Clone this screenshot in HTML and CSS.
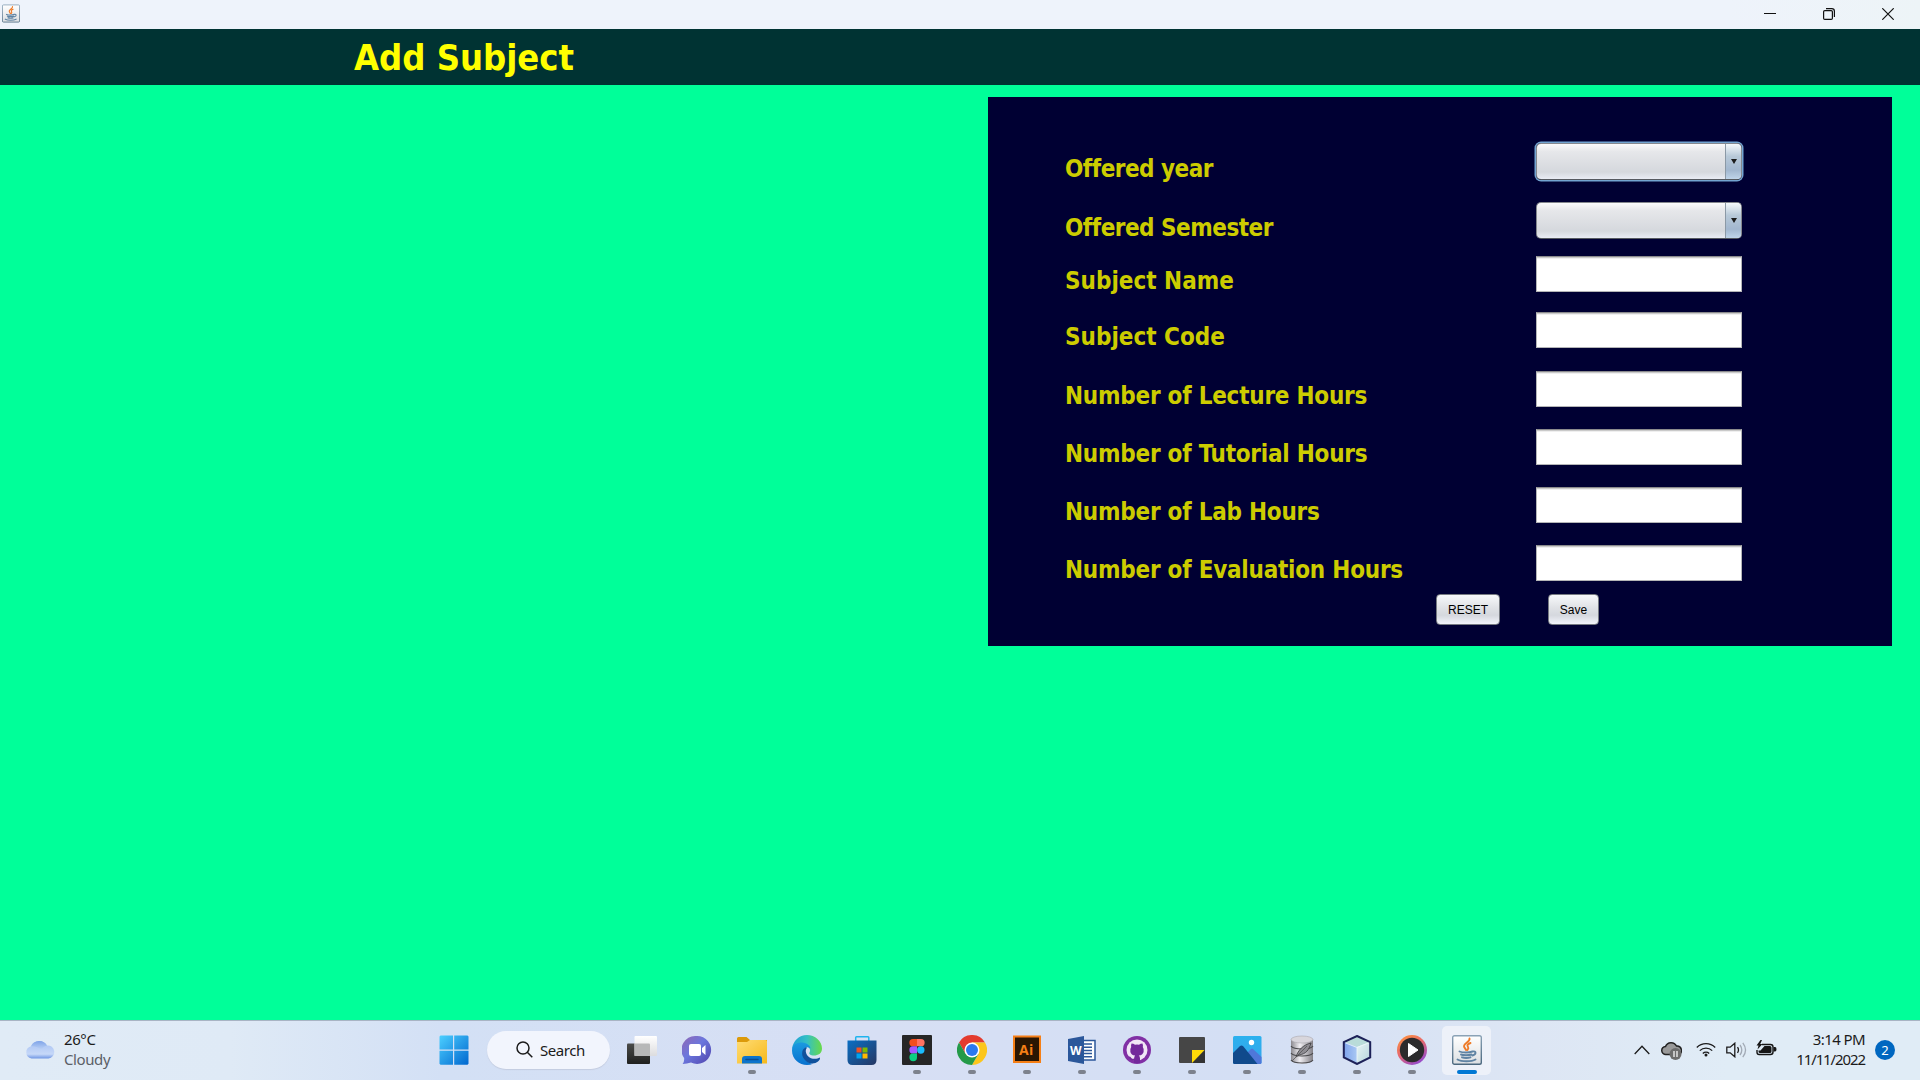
FILE: index.html
```html
<!DOCTYPE html>
<html lang="en">
<head>
<meta charset="utf-8">
<title>Add Subject</title>
<link rel="stylesheet" href="styles.css">
</head>
<body>
<div class="screen">
  <div class="titlebar">
    <svg class="app-icon" viewBox="0 0 30 30"><use href="#java"/></svg>
    <div class="window-buttons">
      <svg viewBox="0 0 12 12"><path d="M0 5.5h12"/></svg>
      <svg viewBox="0 0 12 12"><rect x=".6" y="2.6" width="8.8" height="8.8" rx="1.2"/><path d="M3 .6h5.8a2.6 2.6 0 0 1 2.6 2.6V9"/></svg>
      <svg viewBox="0 0 12 12"><path d="M.3.3l11.4 11.4M11.7.3L.3 11.7"/></svg>
    </div>
  </div>
  <header class="header"><h1 class="heading">Add Subject</h1></header>
  <main class="content">
    <form class="panel">
      <div class="fields">
        <label class="label tight">Offered year</label>
        <div class="combo focused"><span class="combo-arrow"></span></div>
        <label class="label tight">Offered Semester</label>
        <div class="combo"><span class="combo-arrow"></span></div>
        <label class="label">Subject Name</label>
        <div class="field"></div>
        <label class="label">Subject Code</label>
        <div class="field"></div>
        <label class="label snug">Number of Lecture Hours</label>
        <div class="field"></div>
        <label class="label snug">Number of Tutorial Hours</label>
        <div class="field"></div>
        <label class="label snug">Number of Lab Hours</label>
        <div class="field"></div>
        <label class="label snug">Number of Evaluation Hours</label>
        <div class="field"></div>
      </div>
      <div class="actions">
        <button class="button reset" type="button">RESET</button>
        <button class="button save" type="button">Save</button>
      </div>
    </form>
  </main>
  <footer class="taskbar">
    <div class="weather">
      <svg class="cloud" viewBox="0 0 30 20">
        <defs>
          <linearGradient id="cl" x2="0" y2="1"><stop stop-color="#7ea3e8"/><stop offset="1" stop-color="#c3d7f7"/></linearGradient>
          <linearGradient id="cl2" x2="0" y2="1"><stop stop-color="#a5c0f2"/><stop offset=".75" stop-color="#c6d8f8"/><stop offset="1" stop-color="#6f96e4"/></linearGradient>
        </defs>
        <path fill="url(#cl2)" d="M6.5 19.5A6.3 6.3 0 0 1 6 7.2 9 9 0 0 1 22 6.5a6.5 6.5 0 0 1 1.5 13z"/>
        <path fill="url(#cl)" d="M6 7.2A9 9 0 0 1 22 6.5q-4.5 1-5.5 5Q12.5 7 6 7.2z"/>
      </svg>
      <div class="weather-text"><span>26°C</span><span class="muted">Cloudy</span></div>
    </div>
    <div class="dock">
      <div class="start">
        <svg class="icon" viewBox="0 0 30 30">
          <linearGradient id="win" x2="1" y2="1"><stop stop-color="#4ccfff"/><stop offset="1" stop-color="#0067cf"/></linearGradient>
          <path fill="url(#win)" d="M1.5.5H14v14H.5v-13zM15.2.5h13.300l1 1v13H15.200zM.5 15.700H14v14H1.500l-1-1zM15.200 15.700h14.300v13l-1 1H15.200z"/>
        </svg>
      </div>
      <div class="search">
        <svg class="search-icon" viewBox="0 0 17 17"><circle cx="7" cy="7" r="6"/><path d="M11.3 11.3L16.3 16.3"/></svg>
        <span>Search</span>
      </div>
      <div class="task">
        <svg class="icon" viewBox="0 0 30 30">
          <linearGradient id="tv" x2="0" y2="1"><stop stop-color="#4a4b49"/><stop offset="1" stop-color="#20211f"/></linearGradient>
          <linearGradient id="tv2" x2="0" y2="1"><stop stop-color="#fff"/><stop offset="1" stop-color="#dcdcde"/></linearGradient>
          <rect y="8.5" width="23" height="20.5" rx="1" fill="url(#tv)"/><rect x="7.5" y="1" width="22.5" height="20" rx="1" fill="url(#tv2)"/><path d="M7.5 8.5H22q1 0 1 1V21H7.500z" fill="#b7b8b8"/>
        </svg>
      </div>
      <div class="task">
        <svg class="icon" viewBox="0 0 30 30">
          <linearGradient id="chat" x2="1" y2="1"><stop stop-color="#9267b4"/><stop offset=".45" stop-color="#6b77dd"/><stop offset="1" stop-color="#5144ad"/></linearGradient>
          <path fill="url(#chat)" d="M15 1a14 14 0 1 1-6 26.600Q5 29 .6 29q1.900-2.500 1.500-6A14 14 0 0 1 15 1z"/>
          <rect x="7" y="9" width="12" height="12" rx="2" fill="#fff"/><path fill="#fff" d="M20 13l3.500-3v10L20 17z"/>
        </svg>
      </div>
      <div class="task">
        <svg class="icon" viewBox="0 0 30 30">
          <linearGradient id="fo" x2="1" y2="1"><stop stop-color="#ffdc75"/><stop offset="1" stop-color="#f6b91b"/></linearGradient>
          <path fill="#dc9a0a" d="M0 9V3.500Q0 2 1.500 2h8L13 5h17v4z"/><path fill="url(#fo)" d="M0 7h10l3-2h15.500Q30 5 30 6.500V28.500H0z"/>
          <path fill="#0d74cc" d="M5 28.500V24q0-3 3-3h14q3 0 3 3v4.500z"/><path d="M9 24.500h12" stroke="#0b4d92" stroke-width="1.5" stroke-linecap="round"/>
        </svg><i class="dot"></i>
      </div>
      <div class="task">
        <svg class="icon" viewBox="0 0 30 30">
          <linearGradient id="e1" x2="1"><stop stop-color="#1c9ed8"/><stop offset=".5" stop-color="#35c0c4"/><stop offset="1" stop-color="#68da48"/></linearGradient>
          <linearGradient id="e2" x2="0" y2="1"><stop stop-color="#1b9ae0"/><stop offset="1" stop-color="#0871cf"/></linearGradient>
          <path fill="url(#e1)" d="M0 14C1 6 7 0 15 0s15 6 15 13.500c0 5-4 7-8 7-3.500 0-5.500-1.500-4.500-3 2-3-1-7-6-7-4 0-9 1-11.500 3.500z"/>
          <path fill="url(#e2)" d="M0 15.500C0 10 5 7 10 7.500c5 .3 8.500 3.500 8.500 6-4-3-7 0-7 4C11.500 24 17 29 21 28.700 12 32.500 0 27 0 15.500z"/>
          <path fill="#10519c" d="M13.200 12.500C9 15 9 22 14 26c4 3.500 9 3 12 .5 1.500-1.300 2.500-3 1.800-4-3 2-9 2-12-1.500-2-2.500-3-6-.6-8.500z"/>
        </svg>
      </div>
      <div class="task">
        <svg class="icon" viewBox="0 0 30 30">
          <linearGradient id="st" x2="1" y2="1"><stop stop-color="#0a6fc4"/><stop offset="1" stop-color="#263763"/></linearGradient>
          <path d="M8.700 6.500V2.500q0-.8.800-.8h11.500q.8 0 .8.800v4" fill="none" stroke="#20b4ee" stroke-width="1.5"/><path fill="url(#st)" d="M.5 5.500h29V25q0 5-5 5h-19q-5 0-5-5z"/>
          <path fill="#f25022" d="M9.500 12.500h5v5h-5z"/><path fill="#7fba00" d="M15.500 12.500h5v5h-5z"/><path fill="#00a4ef" d="M9.500 18.500h5v5h-5z"/><path fill="#ffb900" d="M15.500 18.500h5v5h-5z"/>
        </svg>
      </div>
      <div class="task">
        <svg class="icon" viewBox="0 0 30 30">
          <rect width="30" height="30" rx="1" fill="#262626"/><path fill="#f24e1e" d="M15 4h-4a3.500 3.500 0 0 0 0 7.300h4z"/><path fill="#ff7262" d="M15 4h4a3.500 3.500 0 0 1 0 7.300h-4z"/><path fill="#a259ff" d="M15 11.300h-4a3.500 3.500 0 0 0 0 7.300h4z"/><circle cx="18.800" cy="15" r="3.700" fill="#1abcfe"/><path fill="#0acf83" d="M15 18.600h-4a3.800 3.800 0 1 0 4 3.800z"/>
        </svg><i class="dot"></i>
      </div>
      <div class="task">
        <svg class="icon" viewBox="0 0 30 30">
          <path fill="#e33b2e" d="M2 7.500A15 15 0 0 1 28 7.500H15L8.500 19z"/><path fill="#fcc61c" d="M28 7.500A15 15 0 0 1 15 30l6.500-11.300L15 7.500z"/><path fill="#249a49" d="M15 30A15 15 0 0 1 2 7.500l6.500 11.300 13 0z"/><circle cx="15" cy="15" r="7.500" fill="#fff"/><circle cx="15" cy="15" r="6" fill="#2b79ef"/>
        </svg><i class="dot"></i>
      </div>
      <div class="task">
        <svg class="icon" viewBox="0 0 30 30">
          <rect x="2" y="1.5" width="26" height="25.5" fill="#2a1602" stroke="#f57f16" stroke-width="2"/><text class="ai" x="7" y="19.5">Ai</text>
        </svg><i class="dot"></i>
      </div>
      <div class="task">
        <svg class="icon" viewBox="0 0 30 30">
          <rect x="15" y="5.500" width="13" height="19.500" fill="#fff" stroke="#2b579a" stroke-width="1.5"/><path d="M16 9h9M16 12.200h9M16 15.400h9M16 18.600h9M16 21.800h9" stroke="#2b579a" stroke-width="1.5"/><path fill="#2b579a" d="M1 4l16-3v28L1 26z"/><text class="word" x="3" y="20">W</text>
        </svg><i class="dot"></i>
      </div>
      <div class="task">
        <svg class="icon" viewBox="0 0 30 30">
          <circle cx="15" cy="15" r="14" fill="#8130a5"/><circle cx="15" cy="15" r="10.500" fill="#f1e7f6"/><path fill="#73299b" d="M9.500 8.500q2 0 3.500 1.200 2-.4 4 0 1.500-1.200 3.500-1.200.8 2 .3 3.500 1.500 2 .8 5-.8 3-4.800 3.600 1.200 1 1.200 3V28h-6v-3q-3.500.7-4.500-1.800-.5-1-1.200-1.500 2-.4 3 1.200 1 1.300 2.800.6.100-2 1-2.900-4-.6-4.700-3.600-.7-3 .8-5-.5-1.500.3-3.500z"/>
        </svg><i class="dot"></i>
      </div>
      <div class="task">
        <svg class="icon" viewBox="0 0 30 30"><rect x="2" y="2" width="26" height="26" rx="1" fill="#464646"/><path fill="#333" d="M28 15v13H15z"/><path fill="#fedb08" d="M15 15h12.500L15 28z"/></svg><i class="dot"></i>
      </div>
      <div class="task">
        <svg class="icon" viewBox="0 0 30 30">
          <linearGradient id="ph" x2="0" y2="1"><stop stop-color="#2cb1ee"/><stop offset="1" stop-color="#35a4eb"/></linearGradient>
          <rect x="1" y="1" width="28.500" height="28" rx="1.500" fill="url(#ph)"/><path fill="#4f77d9" d="M13 20l6-6q1-.8 2 0l8.500 8v6l-1 1H13z"/><path fill="#104a8c" d="M1 18l7-7q1.500-1 3 0l14.500 18H2l-1-1z"/><circle cx="19.500" cy="7.500" r="2.700" fill="#fff"/>
        </svg><i class="dot"></i>
      </div>
      <div class="task">
        <svg class="icon" viewBox="0 0 30 30">
          <linearGradient id="db"><stop stop-color="#8b898f"/><stop offset=".4" stop-color="#f0eef2"/><stop offset="1" stop-color="#828086"/></linearGradient>
          <path fill="url(#db)" d="M4 4v21c2 5 20 5 22 0V4z"/><ellipse cx="15" cy="4.500" rx="11" ry="3.500" fill="#d8d6dc" stroke="#aaa8af" stroke-width=".6"/><path d="M4 11c3 4 19 4 22 0M4 18c3 4 19 4 22 0M4 25c3 4 19 4 22 0" fill="none" stroke="#4a4a4d" stroke-width="1.2"/><path fill="#8f8d93" stroke="#37373a" stroke-width=".8" d="M9 22c2-7 7-12 15-14-2 7-5 11-12 12z"/><path d="M5 26L20 11" stroke="#555" stroke-width=".8"/>
        </svg><i class="dot"></i>
      </div>
      <div class="task">
        <svg class="icon" viewBox="0 0 30 30">
          <linearGradient id="nb"><stop stop-color="#7fa3ec"/><stop offset="1" stop-color="#a9c8f3"/></linearGradient>
          <linearGradient id="nb2" x2="1" y2="1"><stop stop-color="#e8f5f5"/><stop offset="1" stop-color="#b5d4dc"/></linearGradient>
          <path fill="#b9dcd9" d="M15 1l13 6-13 5L2 7z"/><path fill="url(#nb)" d="M2 7l13 5v17L2 22z"/><path fill="url(#nb2)" d="M28 7l-13 5v17l13-7z"/><path d="M15 1l13.200 6.200v15.300L15 29 1.800 22.500V7.200z" fill="none" stroke="#1d2158" stroke-width="2"/><path d="M3.500 8L15 12.500 26.500 8M15 12.500v14" fill="none" stroke="#eff8fa" stroke-width=".8"/>
        </svg><i class="dot"></i>
      </div>
      <div class="task">
        <svg class="icon" viewBox="0 0 30 30">
          <linearGradient id="mp" x2=".6" y2="1"><stop stop-color="#ff9a36"/><stop offset=".5" stop-color="#e96a69"/><stop offset="1" stop-color="#994cc8"/></linearGradient>
          <circle cx="15" cy="15" r="15" fill="url(#mp)"/><circle cx="15" cy="15" r="12.200" fill="#2c2b2c"/><path fill="#fff" stroke="#fff" stroke-linejoin="round" d="M11.500 8.500v13L21 15z"/>
        </svg><i class="dot"></i>
      </div>
      <div class="task active">
        <svg class="icon" viewBox="0 0 30 30">
          <defs><linearGradient id="jb" x2="0" y2="1"><stop stop-color="#fff"/><stop offset="1" stop-color="#dcdfe2"/></linearGradient><linearGradient id="je" x2="0" y2="1"><stop stop-color="#8aa2b6"/><stop offset="1" stop-color="#4b687f"/></linearGradient></defs>
          <g id="java"><rect x=".7" y=".7" width="28.600" height="28.600" rx="1.800" fill="url(#jb)" stroke="url(#je)" stroke-width="1.400"/>
          <g fill="none" stroke-linecap="round"><path d="M17.500 3.500c1 3-5.500 4.500-5.500 7.500 0 1.700 1.500 2.500 2 4M18.500 8c-3 1-3.700 2.500-2.500 4 .8 1.200.3 2-.5 3" stroke="#ee7b28" stroke-width="1.900"/><path d="M7.500 16.500c3 1.300 9.500 1.300 13 0M9 19.500c3 1 7 1 10.500 0M10 22.300c3 .9 5.500.9 8.500 0M20.500 16.500c4-1 4 3 0 4M5.500 24.500c4 2.300 14 2.300 18 0" stroke="#5f83a3" stroke-width="1.900"/></g></g>
        </svg><i class="dot"></i>
      </div>
    </div>
    <div class="tray">
      <svg class="chevron" viewBox="0 0 16 10"><path d="M.7 9L8 1.300 15.300 9"/></svg>
      <svg class="onedrive" viewBox="0 0 21 20"><path d="M5 13.500a4 4 0 0 1-.5-8A6 6 0 0 1 15.500 5a4.500 4.500 0 0 1 2.500 8.500z" fill="#999" stroke="#222" stroke-width="1.500"/><circle cx="14.500" cy="13" r="6" fill="#6c6c6c"/><path d="M13 10v6M16 10v6" stroke="#fff" stroke-width="1.200"/></svg>
      <svg class="wifi" viewBox="0 0 20 15"><path d="M.8 5.500a13 13 0 0 1 18.400 0M3.800 8.600a8.800 8.800 0 0 1 12.400 0M6.800 11.500a4.600 4.600 0 0 1 6.400 0"/><circle cx="10" cy="13" r="1.500"/></svg>
      <svg class="volume" viewBox="0 0 21 16"><path d="M.8 5.200h3.400L8.800 1.200v13.600L4.200 10.800H.8zM11.500 5.200q2 2.800 0 5.600"/><path class="faint" d="M14 3q3.600 5 0 10M16.800.8q5.500 7.200 0 14.400"/></svg>
      <svg class="battery" viewBox="0 0 21 16"><path d="M6 4.500h8.500a2.500 2.500 0 0 1 2.500 2.500v5a2.500 2.500 0 0 1-2.500 2.500H3.200a2.200 2.200 0 0 1-2.200-2.200V10" fill="none" stroke="#161616" stroke-width="1.400"/><path d="M8.500 6h5.500q1.500 0 1.500 1.500v4q0 1.500-1.500 1.500H4q-1.500 0-1.500-1.500V10.500h2zM17.500 7h1.500q1.500 0 1.500 2.300t-1.500 2.300h-1.500zM4.500 0L.5 5.500h2L1.500 9.500 6.500 4H4.200L6 0z" fill="#161616"/></svg>
      <div class="clock"><span class="time">3:14 PM</span><span class="date">11/11/2022</span></div>
      <span class="badge">2</span>
    </div>
  </footer>
</div>
</body>
</html>
```
FILE: styles.css
```css
* { box-sizing: border-box; }
body { margin: 0; }
.screen { width: 1920px; height: 1080px; display: flex; flex-direction: column; background: #00ff99; overflow: hidden; }

.titlebar { height: 29px; flex: none; display: flex; justify-content: space-between; background: linear-gradient(90deg, #eef3fb 0 90%, #edf4f7); }
.app-icon { width: 18px; height: 19px; margin: 4px 0 0 2px; }
.window-buttons { display: flex; gap: 47px; padding: 8px 26px 0 0; }
.window-buttons svg { width: 12px; height: 12px; fill: none; stroke: #111; stroke-width: 1.2; }
.window-buttons svg:first-child { stroke-width: 1; }

.header { height: 56px; flex: none; background: #003333; padding: 1px 0 0 354px; }
.heading { margin: 0; font: bold 36px/56px "DejaVu Sans Condensed", "DejaVu Sans", sans-serif; color: #ffff00; }

.content { flex: 1; display: flex; justify-content: flex-end; align-items: flex-start; padding: 12px 28px 0 0; }
.panel { width: 904px; height: 549px; background: #000033; padding: 46px 150px 0 77px; }
.fields { display: grid; grid-template-columns: 471px 206px; grid-template-rows: 59px 54px 56px 59px 58px 58px 58px 49px; align-items: start; }
.label { height: 28px; margin-top: 11px; font: bold 24px/28px "DejaVu Sans Condensed", "DejaVu Sans", sans-serif; color: #cccc00; white-space: nowrap; }
.tight { letter-spacing: -0.5px; margin-top: 12px; }
.snug { letter-spacing: -0.23px; }
.field { height: 36px; background: #fff; border: 1px solid #b4b5b7; border-top-color: #8b8b8d; box-shadow: inset 0 1px #cacaca, inset 0 2px #efefef; }
.combo { height: 37px; display: flex; justify-content: flex-end; border: 1px solid #85888e; border-bottom-color: #565a60; border-radius: 5px; background: linear-gradient(#fbfbfc, #e6e7ea 22%, #d5d8dd 80%, #e9ecf4); overflow: hidden; }
.focused { box-shadow: 0 0 0 1.5px #73a4d1; }
.combo-arrow { width: 16px; border-left: 1px solid #8b99a6; background: linear-gradient(#f5f9fc, #b8c9d8 35%, #a2b7cf 75%, #bfd4e9); display: flex; align-items: center; justify-content: center; }
.combo-arrow::before { content: ""; border: 3.5px solid transparent; border-top: 5px solid #1c1c1c; border-bottom: 0; }
.actions { display: flex; gap: 48px; padding-left: 371px; }
.button { height: 31px; padding: 1px 0 0; border: 1px solid #777b82; border-radius: 4px; font: 12px/28px "Liberation Sans", sans-serif; color: #000; background: linear-gradient(#f7f8fa, #dfe1e5 45%, #d5d8de 70%, #f3f5fc); }
.reset { width: 64px; }
.save { width: 51px; }

.taskbar { height: 60px; flex: none; display: flex; border-top: 1px solid #a8b4c4; background: linear-gradient(90deg, #e0ebf6 0%, #dfeaf6 12%, #d3e0f5 23%, #d7dff4 45%, #d4dff4 65%, #dde6f4 80%, #e0ecf6 90%); font: 15px/20px "Noto Sans", "Open Sans", sans-serif; color: #1b1b1b; }
.weather { width: 427px; display: flex; padding: 8px 0 0 25px; letter-spacing: -0.4px; }
.cloud { width: 30px; height: 20px; margin: 10px 9px 0 0; }
.weather-text { display: flex; flex-direction: column; }
.muted { color: #5b6067; }
.dock { display: flex; }
.start { width: 60px; padding: 14px 0 0 12px; }
.icon { width: 30px; height: 30px; display: block; }
.search { width: 123px; height: 38px; margin: 10px 4px 0 0; border-radius: 19px; background: #f2f5fd; box-shadow: 0 1px 1px #c4cce0; display: flex; align-items: center; padding-left: 29px; gap: 7px; letter-spacing: -0.45px; }
.search-icon { width: 17px; height: 17px; margin-top: -1px; fill: none; stroke: #1b1b1b; stroke-width: 1.5; }
.task { width: 55px; height: 59px; padding-top: 14px; display: flex; flex-direction: column; align-items: center; }
.dot { width: 8px; height: 4px; border-radius: 2px; margin-top: 5px; background: #7d828d; }
.active { width: 49px; height: 49px; margin: 5px 3px; padding-top: 9px; border-radius: 5px; background: #edf1f9; }
.active .dot { width: 20px; background: #0078d4; }
.ai { font: bold 14px "Open Sans", sans-serif; fill: #f57f16; letter-spacing: .3px; }
.word { font: bold 12px "Open Sans", sans-serif; fill: #fff; }
.tray { margin-left: auto; display: flex; align-items: center; padding: 0 25px 2px 0; }
.tray svg { flex: none; fill: none; stroke: #1b1b1b; stroke-width: 1.3; }
.chevron { width: 16px; height: 10px; margin-right: 11px; }
.tray .onedrive { width: 21px; height: 20px; margin: 3px 14px 0 0; stroke: none; }
.wifi { width: 20px; height: 15px; margin-right: 10px; }
.wifi circle { fill: #1b1b1b; stroke: none; }
.volume { width: 21px; height: 16px; margin-right: 9px; }
.volume .faint { stroke: #a2aab5; }
.tray .battery { width: 21px; height: 16px; margin: -3px 0 0; stroke: none; }
.clock { width: 88px; margin-top: -1px; display: flex; flex-direction: column; align-items: flex-end; }
.time { letter-spacing: -0.6px; }
.date { letter-spacing: -1.1px; }
.badge { width: 20px; height: 20px; margin-left: 10px; border-radius: 10px; background: #0067c0; color: #fff; font-size: 13px; text-align: center; }
```
